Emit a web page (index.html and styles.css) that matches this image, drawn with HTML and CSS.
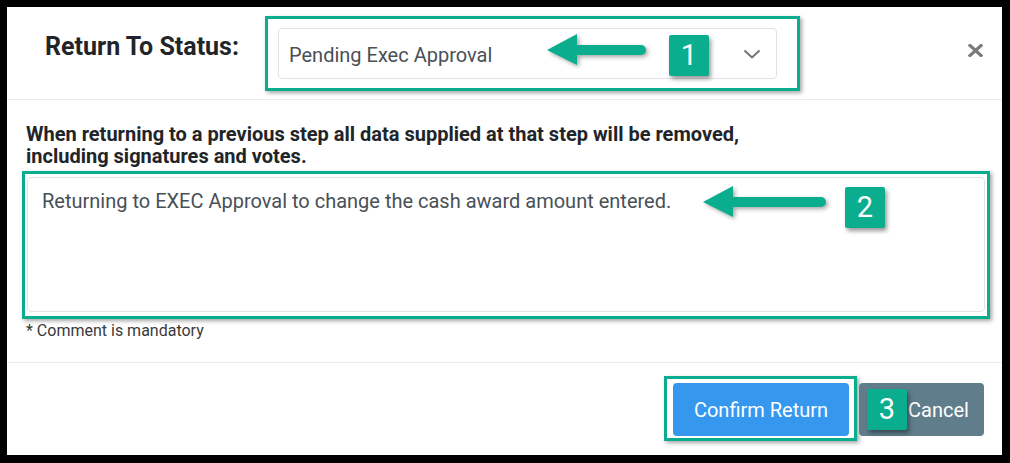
FILE: index.html
```html
<!DOCTYPE html>
<html>
<head>
<meta charset="utf-8">
<link rel="stylesheet" href="styles.css">
</head>
<body>
<div class="modal">
  <div class="modal-header">
    <h2 class="title">Return To Status:</h2>
    <div class="anno">
      <div class="select">
        <span class="select-text">Pending Exec Approval</span>
        <svg class="chevron" width="18" height="10" viewBox="0 0 18 10"><path d="M1.5 1.5 L9 8.5 L16.5 1.5" fill="none" stroke="#6c757d" stroke-width="2"/></svg>
      </div>
      <div class="frame frame-1"></div>
      <svg class="arrow arrow-1" width="104" height="36" viewBox="0 0 104 36"><path d="M0 16 L30 0 L30 11 L94 11 A5 5 0 0 1 94 21 L30 21 L30 31 Z" fill="#0aad8e"/></svg>
      <div class="badge badge-1">1</div>
    </div>
    <div class="spacer"></div>
    <button class="close" aria-label="Close"><svg width="15" height="13" viewBox="0 0 15 13"><path d="M2 1.5 L13 11.5 M13 1.5 L2 11.5" stroke="#7a7a7a" stroke-width="3.2" stroke-linecap="square"/></svg></button>
  </div>
  <div class="modal-body">
    <p class="warning">When returning to a previous step all data supplied at that step will be removed, including signatures and votes.</p>
    <div class="anno">
      <div class="textarea">Returning to EXEC Approval to change the cash award amount entered.</div>
      <div class="frame frame-2"></div>
      <svg class="arrow arrow-2" width="128" height="36" viewBox="0 0 128 36"><path d="M0 16 L30 0 L30 11 L118 11 A5 5 0 0 1 118 21 L30 21 L30 31 Z" fill="#0aad8e"/></svg>
      <div class="badge badge-2">2</div>
    </div>
    <div class="note">* Comment is mandatory</div>
  </div>
  <div class="modal-footer">
    <div class="anno">
      <button class="btn btn-primary">Confirm Return</button>
      <div class="frame frame-3"></div>
    </div>
    <button class="btn btn-cancel">Cancel<span class="badge badge-3">3</span></button>
  </div>
</div>
</body>
</html>
```
FILE: styles.css
```css
html, body {
  margin: 0;
  padding: 0;
  background: #000;
  height: 463px;
  overflow: hidden;
  font-family: Roboto, "Liberation Sans", sans-serif;
}
.modal {
  margin: 7px 8px 8px 7px;
  height: 448px;
  background: #fff;
  display: flex;
  flex-direction: column;
}
.modal-header {
  display: flex;
  align-items: flex-start;
  padding: 21px 19px 20px 38px;
  border-bottom: 1px solid #e9ecef;
}
.title {
  margin: 4px 0 0 0;
  width: 233px;
  font-size: 25px;
  line-height: 30px;
  font-weight: 700;
  color: #212529;
}
.anno {
  position: relative;
}
.select {
  box-sizing: border-box;
  width: 499px;
  height: 51px;
  border: 1px solid #dfe3e8;
  border-radius: 4px;
  display: flex;
  align-items: center;
  padding: 2px 15px 0 10px;
}
.select-text {
  flex: 1;
  font-size: 20px;
  color: #495057;
}
.chevron {
  display: block;
  margin-top: -2px;
}
.frame {
  position: absolute;
  border: 3px solid #0aad8e;
  box-shadow: 2px 2px 4px rgba(0, 0, 0, 0.35);
  pointer-events: none;
}
.frame-1 { left: -13px; right: -23px; top: -12px; bottom: -12px; }
.frame-2 { left: -4px; right: -5px; top: -6px; bottom: -7px; }
.frame-3 { left: -9px; right: -8px; top: -7px; bottom: -5px; }
.arrow {
  position: absolute;
  filter: drop-shadow(2px 2px 2px rgba(0, 0, 0, 0.35));
}
.arrow-1 { left: 269px; top: 6px; }
.arrow-2 { left: 677px; top: 9px; }
.badge {
  position: absolute;
  width: 40px;
  height: 41px;
  background: #0aad8e;
  color: #fff;
  border-radius: 2px;
  font-family: Roboto, "Liberation Sans", sans-serif;
  font-size: 29px;
  line-height: 41px;
  text-align: center;
  box-shadow: 2px 3px 4px rgba(0, 0, 0, 0.4);
}
.badge-1 { left: 391px; top: 7px; }
.badge-2 { left: 819px; top: 10px; }
.badge-3 { left: 8px; top: 6px; }
.spacer { flex: 1; }
.close {
  margin-top: 16px;
  padding: 0;
  border: 0;
  background: none;
  display: block;
}
.close svg { display: block; }
.modal-body {
  padding: 23px 17px 0 19px;
  height: 239px;
  border-bottom: 1px solid #e9ecef;
}
.warning {
  margin: 0 0 10px 0;
  width: 760px;
  font-size: 20px;
  line-height: 22px;
  font-weight: 700;
  color: #212529;
}
.textarea {
  box-sizing: border-box;
  margin-left: 1px;
  height: 135px;
  border: 1px solid #dfe3e8;
  border-radius: 4px;
  padding: 11px 14px;
  font-size: 20px;
  line-height: 24px;
  color: #495057;
}
.note {
  margin-top: 9px;
  font-size: 16px;
  line-height: 19px;
  color: #3a3a3a;
}
.modal-footer {
  display: flex;
  justify-content: flex-end;
  gap: 10px;
  padding: 20px 18px 0 0;
}
.btn {
  box-sizing: border-box;
  height: 53px;
  border: 0;
  border-radius: 4px;
  font-family: Roboto, "Liberation Sans", sans-serif;
  font-size: 20px;
  color: #fff;
  display: block;
  padding: 0;
}
.btn-primary {
  width: 176px;
  background: #3597ee;
}
.btn-cancel {
  position: relative;
  width: 125px;
  background: #607d8b;
  padding-left: 34px;
}
```
